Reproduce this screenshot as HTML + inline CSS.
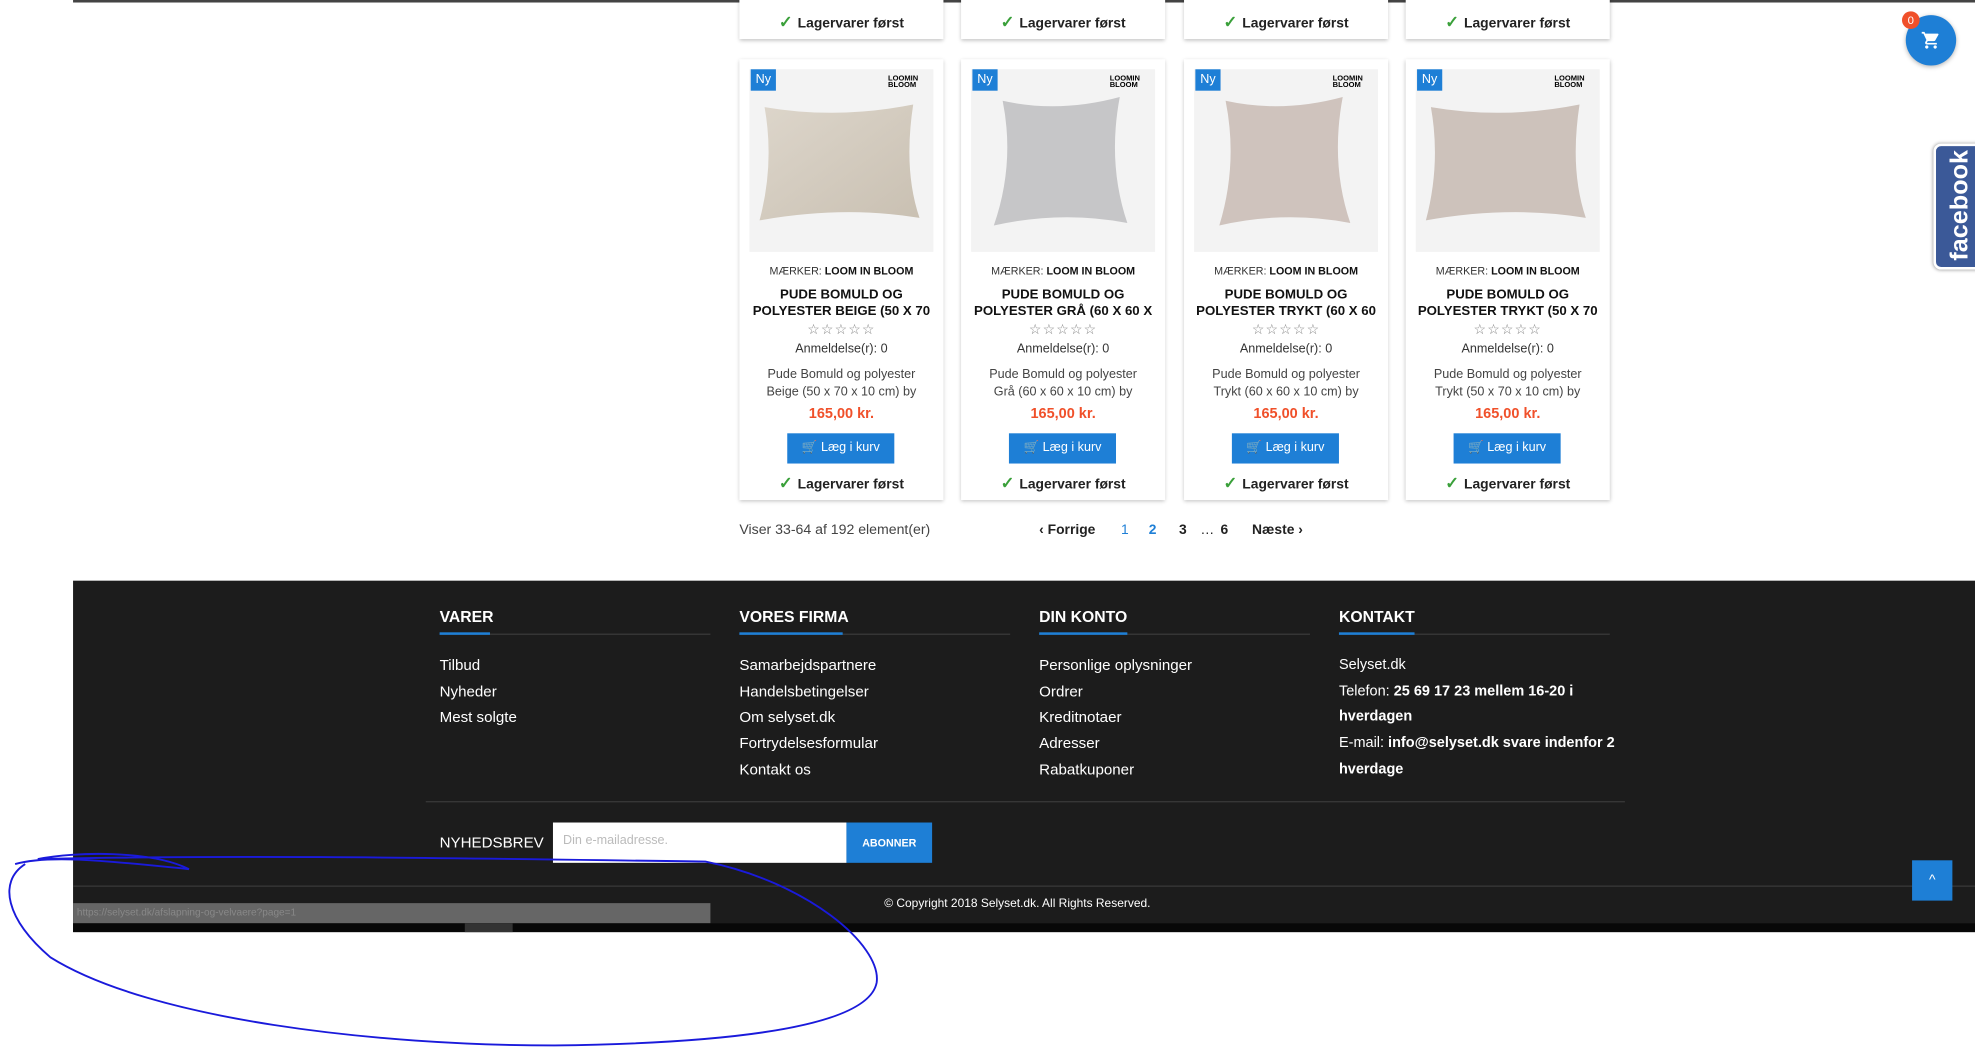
<!DOCTYPE html>
<html><head><meta charset="utf-8"><style>
html,body{margin:0;padding:0;width:1975px;height:1047px;overflow:hidden;background:#fff;font-family:"Liberation Sans",sans-serif}
#w{position:absolute;left:0;top:0;width:1568px;height:831px;transform:scale(1.2596);transform-origin:0 0}
.a{position:absolute;white-space:nowrap}
.card{position:absolute;width:162px;background:#fff;box-shadow:0 1px 3px rgba(0,0,0,.25)}
.c{text-align:center;width:162px;left:0}
.lag{font-size:11px;color:#222;font-weight:bold}
.lag b{color:#3aa03a;font-size:13px;margin-right:4px}
.btn{position:absolute;left:38px;width:85px;height:24px;background:#1e7fd6;color:#fff;font-size:10px;line-height:24px;text-align:center}
.f{color:#fff;font-size:12px}
.fh{color:#fff;font-size:12.5px;font-weight:bold}
</style></head><body><div id="w">
<div class="a" style="left:58px;top:0;width:1510px;height:2px;background:#444"></div>

<div class="card" style="left:587px;top:-10px;height:41px"><div class="a c lag" style="top:20px"><b>✓</b>Lagervarer først</div></div>
<div class="card" style="left:763px;top:-10px;height:41px"><div class="a c lag" style="top:20px"><b>✓</b>Lagervarer først</div></div>
<div class="card" style="left:940px;top:-10px;height:41px"><div class="a c lag" style="top:20px"><b>✓</b>Lagervarer først</div></div>
<div class="card" style="left:1116px;top:-10px;height:41px"><div class="a c lag" style="top:20px"><b>✓</b>Lagervarer først</div></div>

<div class="card" style="left:587px;top:47px;height:350px">
 <div class="a" style="left:8px;top:8px;width:146px;height:145px;background:#f3f3f3"></div>
 <svg class="a" style="left:8px;top:8px" width="146" height="145"><defs><linearGradient id="g1" x1="0" y1="0" x2="1" y2="1"><stop offset="0" stop-color="#ddd6cb"/><stop offset="1" stop-color="#c9c0b2"/></linearGradient></defs><path d="M12 30 Q70 40 130 28 Q122 80 135 118 Q75 108 8 120 Q20 75 12 30Z" fill="url(#g1)"/></svg>
 <div class="a" style="left:9px;top:8px;width:20px;height:17px;background:#1e7fd6;color:#fff;font-size:10px;line-height:17px;text-align:center">Ny</div>
 <div class="a" style="left:118px;top:14px;font-size:6px;font-weight:bold;line-height:5px">LOOMIN<br>BLOOM</div>
 <div class="a c" style="top:163px;font-size:8.5px;color:#333">MÆRKER: <b style="color:#111">LOOM IN BLOOM</b></div>
 <div class="a c" style="top:181px;font-size:10.5px;font-weight:bold;color:#111;line-height:13px">PUDE BOMULD OG<br>POLYESTER BEIGE (50 X 70</div>
 <div class="a c" style="top:208px;font-size:11px;color:#888;letter-spacing:1px">☆☆☆☆☆</div>
 <div class="a c" style="top:225px;font-size:10px;color:#333">Anmeldelse(r): 0</div>
 <div class="a c" style="top:244px;font-size:10px;color:#444;line-height:14px">Pude Bomuld og polyester<br>Beige (50 x 70 x 10 cm) by</div>
 <div class="a c" style="top:276px;font-size:11.5px;font-weight:bold;color:#f0502a">165,00 kr.</div>
 <div class="btn" style="top:297px">🛒 Læg i kurv</div>
 <div class="a c lag" style="top:329px"><b>✓</b>Lagervarer først</div>
</div>
<div class="card" style="left:763px;top:47px;height:350px">
 <div class="a" style="left:8px;top:8px;width:146px;height:145px;background:#f3f3f3"></div>
 <svg class="a" style="left:8px;top:8px" width="146" height="145"><path d="M25 25 Q70 35 118 22 Q108 75 124 122 Q72 112 18 124 Q35 75 25 25Z" fill="#c6c6c8"/></svg>
 <div class="a" style="left:9px;top:8px;width:20px;height:17px;background:#1e7fd6;color:#fff;font-size:10px;line-height:17px;text-align:center">Ny</div>
 <div class="a" style="left:118px;top:14px;font-size:6px;font-weight:bold;line-height:5px">LOOMIN<br>BLOOM</div>
 <div class="a c" style="top:163px;font-size:8.5px;color:#333">MÆRKER: <b style="color:#111">LOOM IN BLOOM</b></div>
 <div class="a c" style="top:181px;font-size:10.5px;font-weight:bold;color:#111;line-height:13px">PUDE BOMULD OG<br>POLYESTER GRÅ (60 X 60 X</div>
 <div class="a c" style="top:208px;font-size:11px;color:#888;letter-spacing:1px">☆☆☆☆☆</div>
 <div class="a c" style="top:225px;font-size:10px;color:#333">Anmeldelse(r): 0</div>
 <div class="a c" style="top:244px;font-size:10px;color:#444;line-height:14px">Pude Bomuld og polyester<br>Grå (60 x 60 x 10 cm) by</div>
 <div class="a c" style="top:276px;font-size:11.5px;font-weight:bold;color:#f0502a">165,00 kr.</div>
 <div class="btn" style="top:297px">🛒 Læg i kurv</div>
 <div class="a c lag" style="top:329px"><b>✓</b>Lagervarer først</div>
</div>
<div class="card" style="left:940px;top:47px;height:350px">
 <div class="a" style="left:8px;top:8px;width:146px;height:145px;background:#f3f3f3"></div>
 <svg class="a" style="left:8px;top:8px" width="146" height="145"><path d="M25 25 Q70 35 118 22 Q108 75 124 122 Q72 112 20 124 Q35 75 25 25Z" fill="#cfc3bd"/></svg>
 <div class="a" style="left:9px;top:8px;width:20px;height:17px;background:#1e7fd6;color:#fff;font-size:10px;line-height:17px;text-align:center">Ny</div>
 <div class="a" style="left:118px;top:14px;font-size:6px;font-weight:bold;line-height:5px">LOOMIN<br>BLOOM</div>
 <div class="a c" style="top:163px;font-size:8.5px;color:#333">MÆRKER: <b style="color:#111">LOOM IN BLOOM</b></div>
 <div class="a c" style="top:181px;font-size:10.5px;font-weight:bold;color:#111;line-height:13px">PUDE BOMULD OG<br>POLYESTER TRYKT (60 X 60</div>
 <div class="a c" style="top:208px;font-size:11px;color:#888;letter-spacing:1px">☆☆☆☆☆</div>
 <div class="a c" style="top:225px;font-size:10px;color:#333">Anmeldelse(r): 0</div>
 <div class="a c" style="top:244px;font-size:10px;color:#444;line-height:14px">Pude Bomuld og polyester<br>Trykt (60 x 60 x 10 cm) by</div>
 <div class="a c" style="top:276px;font-size:11.5px;font-weight:bold;color:#f0502a">165,00 kr.</div>
 <div class="btn" style="top:297px">🛒 Læg i kurv</div>
 <div class="a c lag" style="top:329px"><b>✓</b>Lagervarer først</div>
</div>
<div class="card" style="left:1116px;top:47px;height:350px">
 <div class="a" style="left:8px;top:8px;width:146px;height:145px;background:#f3f3f3"></div>
 <svg class="a" style="left:8px;top:8px" width="146" height="145"><path d="M12 30 Q70 40 130 28 Q122 80 135 118 Q75 108 8 120 Q20 75 12 30Z" fill="#cdc2bb"/></svg>
 <div class="a" style="left:9px;top:8px;width:20px;height:17px;background:#1e7fd6;color:#fff;font-size:10px;line-height:17px;text-align:center">Ny</div>
 <div class="a" style="left:118px;top:14px;font-size:6px;font-weight:bold;line-height:5px">LOOMIN<br>BLOOM</div>
 <div class="a c" style="top:163px;font-size:8.5px;color:#333">MÆRKER: <b style="color:#111">LOOM IN BLOOM</b></div>
 <div class="a c" style="top:181px;font-size:10.5px;font-weight:bold;color:#111;line-height:13px">PUDE BOMULD OG<br>POLYESTER TRYKT (50 X 70</div>
 <div class="a c" style="top:208px;font-size:11px;color:#888;letter-spacing:1px">☆☆☆☆☆</div>
 <div class="a c" style="top:225px;font-size:10px;color:#333">Anmeldelse(r): 0</div>
 <div class="a c" style="top:244px;font-size:10px;color:#444;line-height:14px">Pude Bomuld og polyester<br>Trykt (50 x 70 x 10 cm) by</div>
 <div class="a c" style="top:276px;font-size:11.5px;font-weight:bold;color:#f0502a">165,00 kr.</div>
 <div class="btn" style="top:297px">🛒 Læg i kurv</div>
 <div class="a c lag" style="top:329px"><b>✓</b>Lagervarer først</div>
</div>

<div class="a" style="left:587px;top:415px;font-size:11.2px;color:#444">Viser 33-64 af 192 element(er)</div>
<div class="a" style="left:825px;top:415px;font-size:11px;color:#222;font-weight:bold">‹ Forrige</div>
<div class="a" style="left:890px;top:415px;font-size:11px;color:#1e7fd6">1</div>
<div class="a" style="left:912px;top:415px;font-size:11px;color:#1e7fd6;font-weight:bold">2</div>
<div class="a" style="left:936px;top:415px;font-size:11px;color:#222;font-weight:bold">3</div>
<div class="a" style="left:953px;top:415px;font-size:11px;color:#222">…</div>
<div class="a" style="left:969px;top:415px;font-size:11px;color:#222;font-weight:bold">6</div>
<div class="a" style="left:994px;top:415px;font-size:11px;color:#222;font-weight:bold">Næste ›</div>

<div class="a" style="left:1513px;top:12px;width:40px;height:40px;border-radius:50%;background:#1e7fd6;box-shadow:0 1px 4px rgba(0,0,0,.3)"></div>
<svg class="a" style="left:1525px;top:24px" width="16" height="16" viewBox="0 0 24 24"><path fill="#fff" d="M7 18c-1.1 0-2 .9-2 2s.9 2 2 2 2-.9 2-2-.9-2-2-2zM1 2v2h2l3.6 7.6-1.4 2.4C5.1 14.3 5 14.6 5 15c0 1.1.9 2 2 2h12v-2H7.4c-.1 0-.2-.1-.2-.2v-.1l.9-1.7h7.4c.8 0 1.4-.4 1.7-1l3.6-6.5c.1-.2.2-.3.2-.5 0-.6-.4-1-1-1H5.2l-.9-2H1zm16 16c-1.1 0-2 .9-2 2s.9 2 2 2 2-.9 2-2-.9-2-2-2z"/></svg>
<div class="a" style="left:1510px;top:9px;width:14px;height:14px;border-radius:50%;background:#f0502a;color:#fff;font-size:9px;line-height:14px;text-align:center">0</div>
<div class="a" style="left:1535px;top:114px;width:40px;height:96px;background:#3b5998;border:2px solid #fff;border-radius:6px;box-shadow:0 0 3px rgba(0,0,0,.4)"></div>
<div class="a" style="left:1508px;top:151px;width:96px;height:24px;transform:rotate(-90deg);color:#fff;font-weight:bold;font-size:20px;text-align:center;line-height:24px">facebook</div>

<div class="a" style="left:58px;top:461px;width:1510px;height:279px;background:#1c1c1c"></div>
<div class="a fh" style="left:349px;top:483px">VARER</div>
<div class="a fh" style="left:587px;top:483px">VORES FIRMA</div>
<div class="a fh" style="left:825px;top:483px">DIN KONTO</div>
<div class="a fh" style="left:1063px;top:483px">KONTAKT</div>
<div class="a" style="left:349px;top:503px;width:215px;height:1px;background:#3a3a3a"></div>
<div class="a" style="left:587px;top:503px;width:215px;height:1px;background:#3a3a3a"></div>
<div class="a" style="left:825px;top:503px;width:215px;height:1px;background:#3a3a3a"></div>
<div class="a" style="left:1063px;top:503px;width:215px;height:1px;background:#3a3a3a"></div>
<div class="a" style="left:349px;top:502px;width:40px;height:2px;background:#1e7fd6"></div>
<div class="a" style="left:587px;top:502px;width:82px;height:2px;background:#1e7fd6"></div>
<div class="a" style="left:825px;top:502px;width:70px;height:2px;background:#1e7fd6"></div>
<div class="a" style="left:1063px;top:502px;width:60px;height:2px;background:#1e7fd6"></div>
<div class="a f" style="left:349px;top:518px;line-height:20.7px">Tilbud<br>Nyheder<br>Mest solgte</div>
<div class="a f" style="left:587px;top:518px;line-height:20.7px">Samarbejdspartnere<br>Handelsbetingelser<br>Om selyset.dk<br>Fortrydelsesformular<br>Kontakt os</div>
<div class="a f" style="left:825px;top:518px;line-height:20.7px">Personlige oplysninger<br>Ordrer<br>Kreditnotaer<br>Adresser<br>Rabatkuponer</div>
<div class="a f" style="left:1063px;top:518px;line-height:20.7px;font-size:11.5px">Selyset.dk<br>Telefon: <b>25 69 17 23 mellem 16-20 i</b><br><b>hverdagen</b><br>E-mail: <b>info@selyset.dk svare indenfor 2</b><br><b>hverdage</b></div>
<div class="a" style="left:338px;top:636px;width:952px;height:1px;background:#3a3a3a"></div>
<div class="a" style="left:349px;top:662px;color:#fff;font-size:12px">NYHEDSBREV</div>
<div class="a" style="left:439px;top:653px;width:233px;height:32px;background:#fff"></div>
<div class="a" style="left:447px;top:662px;color:#bbb;font-size:10px">Din e-mailadresse.</div>
<div class="a" style="left:672px;top:653px;width:68px;height:32px;background:#1e7fd6;color:#fff;font-size:8.5px;font-weight:bold;line-height:32px;text-align:center">ABONNER</div>
<div class="a" style="left:58px;top:703px;width:1510px;height:1px;background:#3a3a3a"></div>
<div class="a" style="left:702px;top:712px;color:#fff;font-size:9.5px">© Copyright 2018 Selyset.dk. All Rights Reserved.</div>
<div class="a" style="left:58px;top:717px;width:506px;height:16px;background:#666;color:#888;font-size:8px;line-height:16px;padding-left:3px;box-sizing:border-box">https://selyset.dk/afslapning-og-velvaere?page=1</div>
<div class="a" style="left:58px;top:733px;width:1510px;height:7px;background:#080808"></div>
<div class="a" style="left:369px;top:733px;width:38px;height:7px;background:#333"></div>
<div class="a" style="left:1518px;top:683px;width:32px;height:32px;background:#1e7fd6;color:#fff;font-size:11px;line-height:32px;text-align:center">^</div>

<svg class="a" style="left:0;top:0" width="1568" height="831"><path d="M12 686 C40 678 90 684 150 690 C120 675 60 676 30 682 C200 678 400 682 560 684 C640 700 700 750 696 780 C690 812 600 828 440 830 C300 830 120 810 40 760 C5 730 -2 700 20 686" fill="none" stroke="#1a1adb" stroke-width="1.5"/></svg>
</div></body></html>
